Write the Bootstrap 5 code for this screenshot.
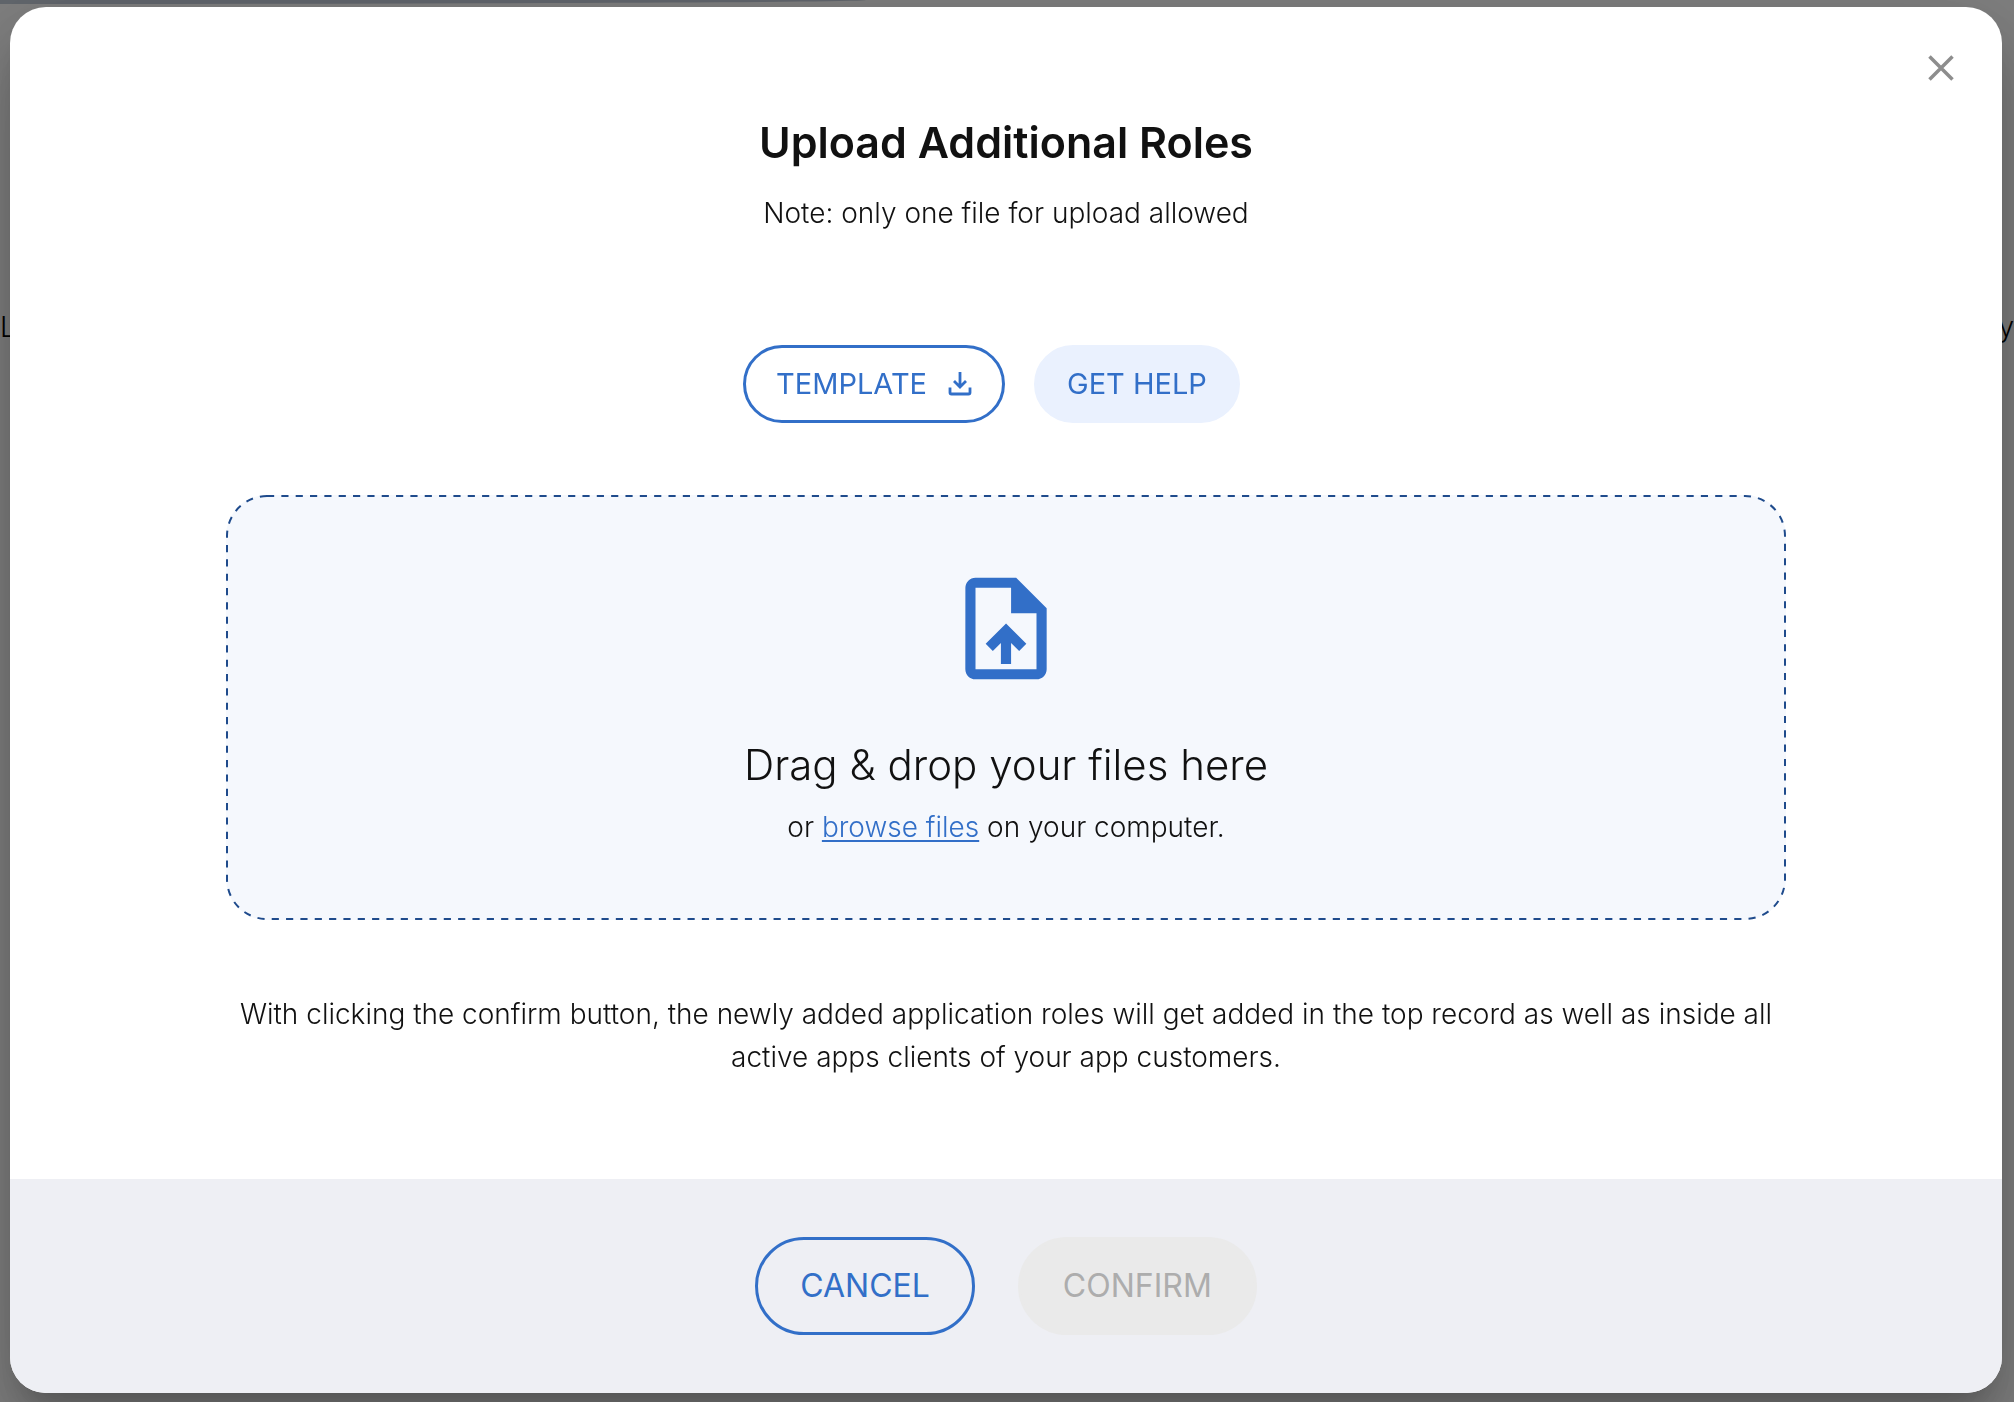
<!DOCTYPE html>
<html lang="en">
<head>
<meta charset="utf-8">
<meta name="viewport" content="width=device-width, initial-scale=1">
<title>Upload Additional Roles</title>
<link href="https://cdn.jsdelivr.net/npm/bootstrap@5.3.0/dist/css/bootstrap.min.css" rel="stylesheet">
<style>
  body { font-family: Inter, "Open Sans", sans-serif; font-size: 28px; font-weight: 300; line-height: 43px; color: #111; background: #fff; overflow: hidden; }
  .page-hero { height: 4px; width: 43%; background: #c4cdda; border-bottom-right-radius: 100% 4px; }
  .page-copy { padding-top: 302px; color: #000; }
  .modal-backdrop { --bs-backdrop-opacity: .5; }
  .upload-dialog { max-width: none; margin: 7px 12px 9px 10px; }
  .upload-content { border: 0; border-radius: 36px; overflow: hidden; color: #111;
    box-shadow: 0 22px 30px -14px rgba(0,0,0,.2), 0 48px 76px 6px rgba(0,0,0,.14), 0 18px 92px 16px rgba(0,0,0,.12); }
  .close-x { top: 37px; right: 37px; width: 48px; height: 48px; color: #8d8d8d; z-index: 2; }
  .upload-body { padding: 111px 216px 100px; }
  .upload-title { font-size: 43px; line-height: 48px; font-weight: 600; margin-bottom: 26px; }
  .upload-note { line-height: 42px; margin-bottom: 111px; }
  .tool-row { gap: 29px; padding-right: 29px; margin-bottom: 72px; }
  .pill { --bs-btn-font-weight: 400; --bs-btn-font-size: 29px; --bs-btn-line-height: 42px; --bs-btn-border-width: 3px;
    --bs-btn-padding-x: 30px; --bs-btn-padding-y: 15px; --bs-btn-border-radius: 50rem; }
  .pill svg { margin-left: 21px; }
  .pill-lg { --bs-btn-font-size: 32px; --bs-btn-line-height: 48px; --bs-btn-padding-x: 42px; --bs-btn-padding-y: 22px; }
  .pill-line { --bs-btn-color: #326fc8; --bs-btn-border-color: #326fc8; --bs-btn-hover-color: #fff; --bs-btn-hover-bg: #326fc8; }
  .pill-soft { --bs-btn-color: #326fc8; --bs-btn-bg: #eaf1fe; --bs-btn-border-color: #eaf1fe; --bs-btn-hover-bg: #d9e6fc; --bs-btn-hover-color: #326fc8; }
  .pill-off { --bs-btn-disabled-color: #adadad; --bs-btn-disabled-bg: #eaeaea; --bs-btn-disabled-border-color: #eaeaea; --bs-btn-disabled-opacity: 1; }
  .drop-zone { padding: 72px 24px; border-radius: 41px; background: #f5f8fd; margin-bottom: 73px; }
  .drop-line rect { x: 1px; y: 1px; width: calc(100% - 2px); height: calc(100% - 2px); fill: none; stroke: #1f4b8c; stroke-width: 2px; }
  .drop-icon { color: #326fc8; margin-bottom: 45px; }
  .drop-title { font-size: 42px; line-height: 60px; font-weight: 300; margin-bottom: 11px; }
  .drop-hint { line-height: 42px; }
  .drop-hint a { color: #326fc8; text-underline-offset: 3px; text-decoration-thickness: 2px; }
  .upload-footer { background: #eeeff4; border: 0; padding: 58px 24px; gap: 43px; }
</style>
<script src="https://cdn.jsdelivr.net/npm/bootstrap@5.3.0/dist/js/bootstrap.bundle.min.js"></script>
</head>
<body>
<main>
  <div class="page-hero"></div>
  <div class="page-copy d-flex justify-content-between"><span>L</span><span>y</span></div>
</main>
<div class="modal-backdrop show"></div>
<div class="modal d-block overflow-hidden" tabindex="-1" role="dialog" aria-modal="true" aria-labelledby="dlgTitle">
  <div class="modal-dialog upload-dialog">
    <div class="modal-content upload-content">
      <button type="button" class="close-x btn p-0 border-0 position-absolute d-flex align-items-center justify-content-center" aria-label="Close">
        <svg width="26" height="26" viewBox="0 0 26 26" fill="none" stroke="currentColor" stroke-width="3.500" aria-hidden="true"><path d="M1.500 1.500l23 23M24.500 1.500l-23 23"/></svg>
      </button>
      <div class="modal-body upload-body text-center">
        <h1 class="upload-title" id="dlgTitle">Upload Additional Roles</h1>
        <p class="upload-note">Note: only one file for upload allowed</p>
        <div class="tool-row d-flex justify-content-center">
          <button type="button" class="btn pill pill-line d-flex align-items-center">TEMPLATE
            <svg width="24" height="24" viewBox="0 0 24 24" fill="none" stroke="currentColor" stroke-width="2.800" aria-hidden="true"><path d="M12 0v14.500M6 9l6 6 6-6"/><path d="M2 15.500v5q0 1.500 1.500 1.500h17q1.500 0 1.500-1.500v-5"/></svg>
          </button>
          <button type="button" class="btn pill pill-soft">GET HELP</button>
        </div>
        <div class="drop-zone position-relative">
          <svg class="drop-line position-absolute top-0 start-0 w-100 h-100" aria-hidden="true"><rect rx="40" ry="40" pathLength="543" stroke-dasharray="1 1"/></svg>
          <svg class="drop-icon d-block mx-auto" width="122" height="123" viewBox="0 0 24 24" fill="currentColor" aria-hidden="true"><path d="M14 2H6c-1.100 0-1.990.9-1.990 2L4 20c0 1.100.89 2 1.990 2H18c1.100 0 2-.9 2-2V8l-6-6zm4 18H6V4h7v5h5v11zM8 15.010l1.410 1.410L11 14.840V19h2v-4.160l1.590 1.590L16 15.010 12.010 11z"/></svg>
          <h2 class="drop-title">Drag &amp; drop your files here</h2>
          <p class="drop-hint position-relative mb-0">or <a href="#">browse files</a> on your computer.</p>
        </div>
        <p class="mb-0">With clicking the confirm button, the newly added application roles will get added in the top record as well as inside all active apps clients of your app customers.</p>
      </div>
      <div class="modal-footer upload-footer justify-content-center">
        <button type="button" class="btn pill pill-lg pill-line m-0">CANCEL</button>
        <button type="button" class="btn pill pill-lg pill-off m-0" disabled>CONFIRM</button>
      </div>
    </div>
  </div>
</div>
</body>
</html>
